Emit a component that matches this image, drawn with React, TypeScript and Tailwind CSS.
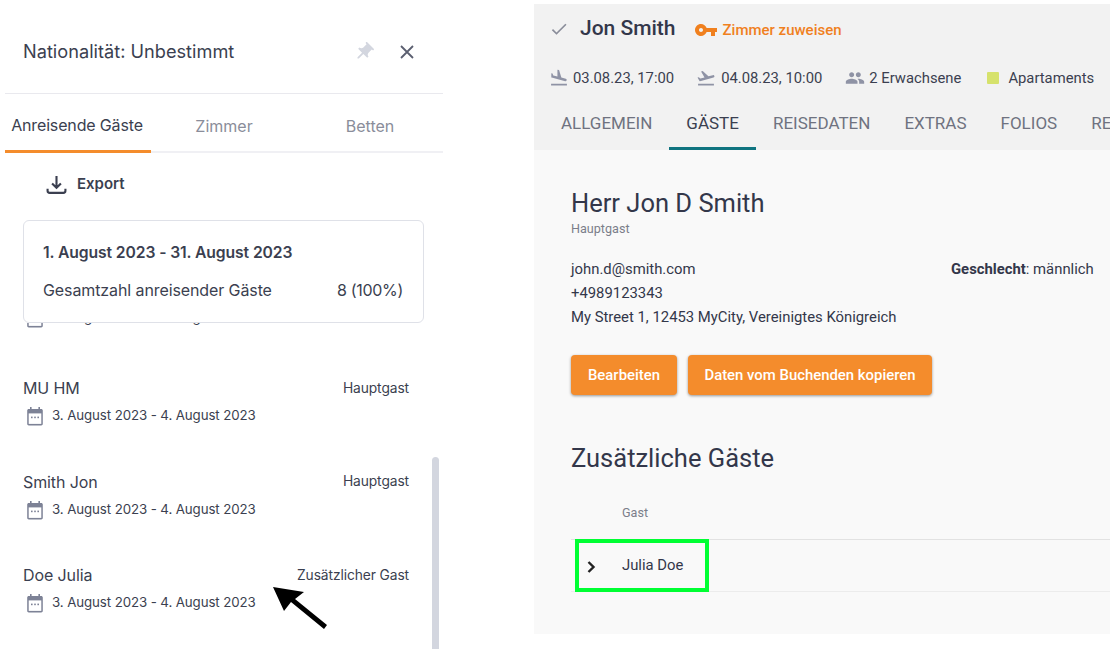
import { ReactNode } from "react";

const Icon = ({ d, className }: { d: string; className: string }) => (
  <svg viewBox="0 0 24 24" fill="currentColor" className={className}>
    <path d={d} />
  </svg>
);

const paths = {
  pin: "M16 9V4h1c.55 0 1-.45 1-1s-.45-1-1-1H7c-.55 0-1 .45-1 1s.45 1 1 1h1v5c0 1.66-1.34 3-3 3v2h5.97v7l1 1 1-1v-7H19v-2c-1.66 0-3-1.34-3-3z",
  check: "M9 16.17L4.83 12l-1.42 1.41L9 19 21 7l-1.41-1.41z",
  key: "M12.65 10C11.83 7.67 9.61 6 7 6c-3.31 0-6 2.69-6 6s2.69 6 6 6c2.61 0 4.83-1.67 5.65-4H17v4h4v-4h2v-4H12.65zM7 14c-1.1 0-2-.9-2-2s.9-2 2-2 2 .9 2 2-.9 2-2 2z",
  land: "M2.5 19h19v2h-19v-2zm7.18-5.73l4.35 1.16 5.31 1.42c.8.21 1.62-.26 1.84-1.06.21-.8-.26-1.62-1.06-1.84l-5.31-1.42-2.76-9.02L10.12 2v8.28L5.15 8.95l-.93-2.32-1.45-.39v5.17l1.6.43 5.31 1.43z",
  takeoff: "M2.5 19h19v2h-19v-2zm19.57-9.36c-.21-.8-1.04-1.28-1.84-1.06L14.92 10l-6.9-6.43-1.93.51 4.14 7.17-4.97 1.33-1.97-1.54-1.45.39 1.82 3.16.77 1.33 1.6-.43 5.31-1.42 4.35-1.16L21 11.49c.81-.23 1.28-1.05 1.07-1.85z",
  people: "M16 11c1.66 0 2.99-1.34 2.99-3S17.66 5 16 5c-1.66 0-3 1.34-3 3s1.34 3 3 3zm-8 0c1.66 0 2.99-1.34 2.99-3S9.66 5 8 5C6.34 5 5 6.34 5 8s1.34 3 3 3zm0 2c-2.33 0-7 1.17-7 3.5V19h14v-2.5c0-2.33-4.67-3.5-7-3.5zm8 0c-.29 0-.62.02-.97.05 1.16.84 1.97 1.97 1.97 3.45V19h6v-2.5c0-2.33-4.67-3.5-7-3.5z",
};

const CalendarIcon = () => (
  <svg viewBox="0 0 20 20" className="w-[20px] h-[20px] shrink-0 text-[#7d8296]" fill="none">
    <path d="M5 1h1.6v2h6.8V1H15v2h1.2c.9 0 1.6.7 1.6 1.6v13.2c0 .9-.7 1.6-1.6 1.6H3.8c-.9 0-1.6-.7-1.6-1.6V4.6C2.2 3.7 2.9 3 3.8 3H5z" fill="currentColor" />
    <rect x="3.7" y="7.4" width="12.6" height="10.5" fill="#fff" />
    <rect x="6" y="10.6" width="1.6" height="1.6" fill="currentColor" />
    <rect x="9.2" y="10.6" width="1.6" height="1.6" fill="currentColor" />
    <rect x="12.4" y="10.6" width="1.6" height="1.6" fill="currentColor" />
  </svg>
);

const guests = [
  { id: "a", name: "", role: "" },
  { id: "b", name: "MU HM", role: "Hauptgast" },
  { id: "c", name: "Smith Jon", role: "Hauptgast" },
  { id: "d", name: "Doe Julia", role: "Zusätzlicher Gast" },
];

const GuestRow = ({ name, role }: { name: string; role: string }) => (
  <div className="h-[93.5px] first:h-[98.5px] pl-[23px] pr-[25px] pt-[18px]">
    <div className="flex justify-between items-center h-[20px]">
      <span className="text-[16px] text-[#3b3f50] tracking-[-0.1px]">{name}</span>
      <span className="text-[13.8px] text-[#3b3f50] tracking-[-0.1px]">{role}</span>
    </div>
    <div className="flex items-center gap-[7px] mt-[8px] pl-[2px] h-[20px]">
      <CalendarIcon />
      <span className="text-[13.3px] text-[#3b3f50] tracking-[-0.1px]">3. August 2023 - 4. August 2023</span>
    </div>
  </div>
);

const Meta = ({ icon, text, gap }: { icon: ReactNode; text: string; gap: string }) => (
  <div className={`flex items-center ${gap}`}>
    {icon}
    <span>{text}</span>
  </div>
);

const tabs = ["ALLGEMEIN", "GÄSTE", "REISEDATEN", "EXTRAS", "FOLIOS", "RECHNUNGEN"];

export default function App() {
  return (
    <div className="w-[1110px] h-[665px] overflow-hidden bg-white flex">
      {/* linke Seite */}
      <div className="relative w-[534px] h-[649px] shrink-0 overflow-hidden font-['Inter',sans-serif]">
        <div className="ml-[5px] w-[438px] h-[94px] border-b border-[#e9e9ee] flex items-center pl-[18px] pr-[29px] pt-[11px]">
          <span className="text-[18.2px] text-[#3b3f50] flex-1">Nationalität: Unbestimmt</span>
          <Icon d={paths.pin} className="w-[22px] h-[22px] text-[#d3d6df] rotate-45 mr-[25px]" />
          <svg viewBox="0 0 14 14" className="w-[14px] h-[14px] text-[#5b5f70]" stroke="currentColor" strokeWidth="1.8">
            <path d="M1 1l12 12M13 1L1 13" />
          </svg>
        </div>

        <div className="ml-[5px] w-[438px] h-[59px] border-b-2 border-[#f0f0f4] flex text-[16px] text-[#8a8d9a]">
          <div className="w-[146px] h-[59px] pt-[6px] pr-[2px] border-b-[3px] border-[#f48c2c] text-[#3b3f50] flex items-center justify-center tracking-[-0.15px]">
            Anreisende Gäste
          </div>
          <div className="w-[146px] pt-[6px] flex items-center justify-center">Zimmer</div>
          <div className="w-[146px] pt-[6px] flex items-center justify-center">Betten</div>
        </div>

        <div className="flex items-center gap-[10px] ml-[46px] mt-[19px] h-[24px] text-[15px] font-semibold text-[#3b3f50]">
          <svg viewBox="0 0 20 20" className="w-[21px] h-[21px]" fill="none" stroke="currentColor" strokeWidth="2">
            <path d="M10 2v11M5.8 9l4.2 4.2L14.2 9M1.5 14v2c0 1.2.8 2 2 2h13c1.2 0 2-.8 2-2v-2" />
          </svg>
          <span>Export</span>
        </div>

        <div className="bg-white ml-[23px] mt-[24px] w-[401px] h-[103px] rounded-[6px] border border-[#dfe1e8] pl-[19px] pr-[20px] pt-[21px] text-[#3b3f50]">
          <div className="text-[15.7px] font-semibold tracking-[-0.1px] leading-[22px]">1. August 2023 - 31. August 2023</div>
          <div className="flex justify-between mt-[15px] text-[16px] leading-[22px] tracking-[-0.1px]">
            <span>Gesamtzahl anreisender Gäste</span>
            <span className="tracking-[-0.3px]">8 (100%)</span>
          </div>
        </div>

        <div className="w-[434px] h-[326px] overflow-hidden">
          <div className="-mt-[61.5px]">
            {guests.map((g) => (
              <GuestRow key={g.id} name={g.name} role={g.role} />
            ))}
          </div>
        </div>

        {/* Scrollbar */}
        <div className="absolute left-[432px] top-[457px] w-[7px] h-[192px] rounded-t-[4px] bg-[#d3d6df]" />

        {/* Pfeil */}
        <svg viewBox="0 0 56 44" className="absolute left-[272px] top-[586px] w-[56px] h-[44px]">
          <path d="M1 1l31 5-9 7 32 26-3 4-33-27-7 9z" fill="#000" />
        </svg>
      </div>

      {/* rechte Seite */}
      <div className="flex-1 h-[630px] mt-[4px] min-w-0 overflow-hidden bg-[#f9f9f9] font-['Roboto',sans-serif]">
        <div className="h-[146px] bg-[#f2f2f2] pl-[15px] overflow-hidden">
          <div className="flex items-center h-[50px]">
            <Icon d={paths.check} className="w-[20px] h-[20px] text-[#8a8d9a] -mt-[1px]" />
            <span className="ml-[11px] text-[21px] font-medium text-[#33374a]">Jon Smith</span>
            <Icon d={paths.key} className="ml-[18px] w-[24px] h-[24px] mt-[2px] text-[#f0801e]" />
            <span className="ml-[5px] text-[15px] font-medium text-[#f0801e] mt-[2px]">Zimmer zuweisen</span>
          </div>
          <div className="flex items-center h-[24px] mt-[12px] text-[14.8px] text-[#3b3f50] whitespace-nowrap">
            <Meta gap="gap-[4px]" text="03.08.23, 17:00" icon={<Icon d={paths.land} className="w-[20px] h-[20px] text-[#8f93a5]" />} />
            <Meta gap="gap-[5px] ml-[22px]" text="04.08.23, 10:00" icon={<Icon d={paths.takeoff} className="w-[20px] h-[20px] text-[#8f93a5]" />} />
            <Meta gap="gap-[4px] ml-[23px]" text="2 Erwachsene" icon={<Icon d={paths.people} className="w-[20px] h-[20px] text-[#8f93a5]" />} />
            <div className="ml-[26px] w-[12px] h-[12px] bg-[#d6e26c] rounded-[1px]" />
            <span className="ml-[9px]">Apartaments</span>
          </div>
          <div className="flex mt-[7px] h-[53px] text-[17px] text-[#6f7280] whitespace-nowrap">
            {tabs.map((t) => (
              <div
                key={t}
                className={
                  t === "GÄSTE"
                    ? "h-[53px] px-[17px] pt-[14px] border-b-[3px] border-[#0f7480] text-[#3b3f50]"
                    : "h-[53px] px-[17px] pt-[14px] first:pl-[12px] first:pr-[17px]"
                }
              >
                {t}
              </div>
            ))}
          </div>
        </div>

        <div className="pl-[37px] pt-[35px] text-[#33374a]">
          <div className="text-[25.5px] leading-[36px]">Herr Jon D Smith</div>
          <div className="text-[12.6px] leading-[16px] text-[#7b7e8a]">Hauptgast</div>

          <div className="flex mt-[20px] text-[14.85px] leading-[24px] whitespace-nowrap">
            <div className="w-[380px]">
              <div>john.d@smith.com</div>
              <div>+4989123343</div>
              <div>My Street 1, 12453 MyCity, Vereinigtes Königreich</div>
            </div>
            <div>
              <span className="font-bold">Geschlecht</span>: männlich
            </div>
          </div>

          <div className="flex gap-[11px] mt-[26px] text-[14.9px] font-medium text-white">
            <div className="h-[40px] pt-[1px] w-[106px] rounded-[4px] bg-[#f48c2c] shadow-[0_1px_3px_rgba(0,0,0,0.4)] flex items-center justify-center">
              Bearbeiten
            </div>
            <div className="h-[40px] pt-[1px] w-[244px] rounded-[4px] bg-[#f48c2c] shadow-[0_1px_3px_rgba(0,0,0,0.4)] flex items-center justify-center">
              Daten vom Buchenden kopieren
            </div>
          </div>

          <div className="text-[25.5px] leading-[36px] mt-[45px]">Zusätzliche Gäste</div>

          <div className="mt-[22px] h-[42px] pl-[51px] text-[12.6px] text-[#7b7e8a] border-b-[1.5px] border-[#e2e2e2] pt-[6px]">
            Gast
          </div>
          <div className="relative h-[52px] border-b border-[#ececec] flex items-center text-[14.85px]">
            <svg viewBox="0 0 10 14" className="ml-[15px] w-[11px] h-[14px] mt-[3px]" fill="none" stroke="#222" strokeWidth="2.4">
              <path d="M2 2l5 5-5 5" />
            </svg>
            <span className="ml-[25px]">Julia Doe</span>
            {/* Markierung */}
            <div className="absolute left-[4px] -top-[1px] w-[134px] h-[53px] border-[4px] border-[#00ff33]" />
          </div>
        </div>
      </div>
    </div>
  );
}
